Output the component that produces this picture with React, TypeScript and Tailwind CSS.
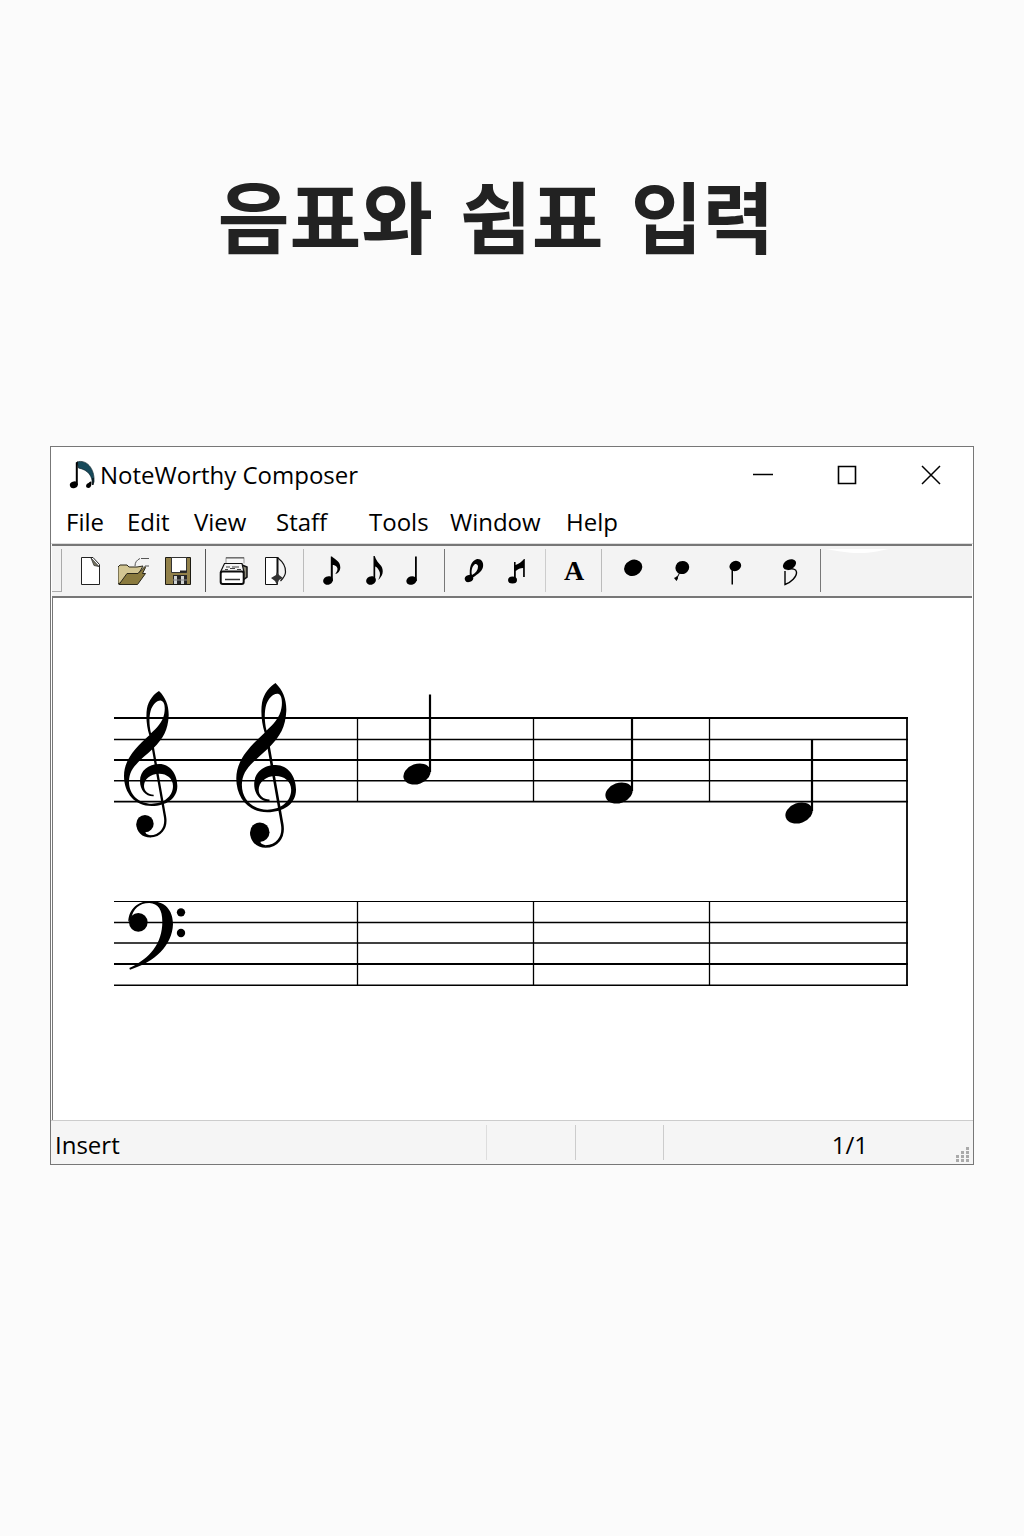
import type { ReactNode } from 'react'
import { clsx } from 'clsx'

interface Tool {
  label: string
  viewBox: string
  icon: ReactNode
}

interface ToolGroup {
  name: string
  className: string
  tools: Tool[]
}

const menus = [
  { title: 'File', className: 'w-[61px]' },
  { title: 'Edit', className: 'w-[67px]' },
  { title: 'View', className: 'w-[82px]' },
  { title: 'Staff', className: 'w-[93px]' },
  { title: 'Tools', className: 'w-[81px]' },
  { title: 'Window', className: 'w-[116px]' },
  { title: 'Help', className: 'w-[60px]' },
]

const toolGroups: ToolGroup[] = [
  {
    name: 'File',
    className: 'gap-3 pl-3 pr-[11px] border-[#555]',
    tools: [
      {
        label: 'New',
        viewBox: '74 555 32 32',
        icon: (
          <>
            <path d="M81.5 557.5H93l6.5 7v20h-18z" fill="#fff" stroke="#222" />
            <path d="M91 558l8 8.500-5-1z" fill="#77745f" stroke="#333" strokeWidth=".8" />
          </>
        ),
      },
      {
        label: 'Open',
        viewBox: '118 555 32 32',
        icon: (
          <>
            <path d="M118 584v-17l2-2h7l2 2h8l6-1-4 7z" fill="#d3c693" stroke="#2a2719" />
            <path d="M119 584.500l8-11h11l7-7 .500 1-3 6h3l-8 11z" fill="#8a7a3e" stroke="#2a2719" />
            <path d="M135 566c0-4 2-6 5-7.500M141 558.500h8M145 566h4" fill="none" stroke="#444" strokeWidth=".9" />
          </>
        ),
      },
      {
        label: 'Save',
        viewBox: '162 555 32 32',
        icon: (
          <>
            <path d="M165.500 557.500h25v27h-25z" fill="#91804a" stroke="#1c1a12" />
            <path d="M171.500 557.500h15v15h-15z" fill="#fff" stroke="#333" />
            <path d="M180 571.500h7" stroke="#222" strokeWidth="2" />
            <path d="M173 575h14v9h-14z" fill="#262626" />
            <path d="M174 576h3v8h-3zM181 576h3v8h-3z" fill="#cfd2d2" />
            <path d="M173 580h14" stroke="#888" />
          </>
        ),
      },
    ],
  },
  {
    name: 'Print',
    className: 'gap-[10px] pl-3 pr-[11px] border-[#bbb]',
    tools: [
      {
        label: 'Print',
        viewBox: '218 555 32 32',
        icon: (
          <>
            <path d="M226 563v-5.500h18v6" fill="#f6f6f6" stroke="#999" />
            <path d="M226 558h18" stroke="#333" strokeWidth=".8" />
            <path d="M242 565l5 2v10l-4 3z" fill="#8d8a79" stroke="#111" strokeWidth="1.500" />
            <path d="M220.500 572l4-8.500h17.500l2 8.500z" fill="#f4f4f4" stroke="#111" strokeWidth="1.200" />
            <path d="M226 567h4m2 0h7M225 569.500h3m2-1h5m2 1h4" stroke="#444" strokeWidth="1.200" />
            <rect x="220.700" y="571.500" width="23" height="12.500" rx="2" fill="#fff" stroke="#0c0c0c" strokeWidth="2" />
            <path d="M225 579.500h15" stroke="#333" strokeWidth="1.500" />
          </>
        ),
      },
      {
        label: 'Print preview',
        viewBox: '260 555 32 32',
        icon: (
          <>
            <path d="M265.500 557.500h12v27h-12z" fill="#fff" stroke="#111" />
            <path d="M277.500 557v20" stroke="#111" strokeWidth="2" />
            <path d="M278 558c5 4 8 8 7.500 14 0 3-2 6-5 9" fill="none" stroke="#111" strokeWidth="1.200" />
            <path d="M271 578l5-3 1-3 2 3 4 3-4 2-2 5-2-4z" fill="#333" />
          </>
        ),
      },
    ],
  },
  {
    name: 'Notes',
    className: 'gap-2 pl-3 pr-4 border-[#777]',
    tools: [
      {
        label: 'Eighth note',
        viewBox: '316 555 32 32',
        icon: (
          <>
            <ellipse cx="328" cy="580.500" rx="5" ry="4.200" transform="rotate(-25 328 580.500)" />
            <path d="M330.800 556.500h1.200c1 2 8.500 4 8.300 11 0 3-2 6-5 6.500 2-3 3-5 1.500-7-1-1.500-3-2-4-2v16h-2z" />
          </>
        ),
      },
      {
        label: 'Sixteenth note',
        viewBox: '356 555 32 32',
        icon: (
          <>
            <ellipse cx="371" cy="580.500" rx="5" ry="4.200" transform="rotate(-25 371 580.500)" />
            <path d="M373.500 556h1.200c1 4 4 7 6.500 10 3 5 1.500 10-3 14 2-4 2.500-7 .500-10-1-2-2-3-3.500-3.500v15h-1.700z" />
          </>
        ),
      },
      {
        label: 'Quarter note',
        viewBox: '396 555 32 32',
        icon: (
          <>
            <ellipse cx="411.500" cy="580.500" rx="5.300" ry="4.200" transform="rotate(-20 411.500 580.500)" />
            <path d="M415 556.500h1.800V581H415z" />
          </>
        ),
      },
    ],
  },
  {
    name: 'Modifiers',
    className: 'gap-[10px] px-[13px] border-[#ccc]',
    tools: [
      {
        label: 'Slur',
        viewBox: '458 555 32 32',
        icon: (
          <>
            <ellipse cx="469" cy="578.500" rx="4.300" ry="3.500" transform="rotate(-20 469 578.500)" />
            <path
              fillRule="evenodd"
              d="M470 577c-1-10 1-16 7-18 4-.500 7 3 6 8-1 5-7 8-12 12zM472 575c4-2 6-5 6-8.500 0-2-2-3-3.500-2-2.500 2-3.500 7-2.500 10.500z"
            />
          </>
        ),
      },
      {
        label: 'Beam',
        viewBox: '500 555 32 32',
        icon: (
          <>
            <ellipse cx="512.500" cy="580" rx="4.500" ry="3.500" />
            <path d="M514 562h1.600v3c3-1 6-3 8.400-6h.800v18h-1.700v-9c-3 0-5 1-7.300 3v9H514z" />
          </>
        ),
      },
    ],
  },
]

const entryTools: Tool[] = [
  {
    label: 'Whole note',
    viewBox: '617 555 32 32',
    icon: <ellipse cx="633.200" cy="567.800" rx="9.300" ry="7.900" transform="rotate(-25 633.200 567.800)" />,
  },
  {
    label: 'Grace note',
    viewBox: '669 555 32 32',
    icon: (
      <>
        <ellipse cx="682.300" cy="567.500" rx="7" ry="6.500" transform="rotate(-25 682.300 567.500)" />
        <path d="M680 572l-3 6" stroke="#000" />
        <path d="M674 578l2-1 1.500-1.500.500 3-1.500 2.500z" />
      </>
    ),
  },
  {
    label: 'Stem down',
    viewBox: '721 555 32 32',
    icon: (
      <>
        <ellipse cx="735.300" cy="566" rx="6" ry="5" transform="rotate(-20 735.300 566)" />
        <path d="M731.500 567h1.500v17.500h-1.500z" />
      </>
    ),
  },
  {
    label: 'Flag down',
    viewBox: '773 555 32 32',
    icon: (
      <>
        <ellipse cx="789.500" cy="564.500" rx="7" ry="4.800" transform="rotate(-28 789.500 564.500)" />
        <path d="M785 571v13.500c6-2 12-8 11.500-12.500-.300-3-4-4-9-2.500" fill="none" stroke="#000" strokeWidth="1.400" />
      </>
    ),
  },
]

const trebleStaff = [
  { y: 718, width: 2 },
  { y: 739.5, width: 1.4 },
  { y: 760, width: 2 },
  { y: 780.7, width: 1.4 },
  { y: 801.7, width: 1.8 },
]

const bassStaff = [
  { y: 901.5, width: 1.2 },
  { y: 922.5, width: 1.4 },
  { y: 943, width: 1.7 },
  { y: 964, width: 2 },
  { y: 985.2, width: 1.5 },
]

const notes = [
  { x: 417, y: 774, top: 694.5 },
  { x: 619, y: 793, top: 718 },
  { x: 799, y: 813, top: 740 },
]

function ToolButton({ tool }: { tool: Tool }) {
  return (
    <button type="button" aria-label={tool.label} className="size-8">
      <svg viewBox={tool.viewBox} className="size-8">
        {tool.icon}
      </svg>
    </button>
  )
}

function AppIcon() {
  return (
    <svg viewBox="68 457 28 32" className="h-8 w-7">
      <path d="M77 460c9-3 18 6 17 20l-1.500 3c0-9-4-15-14-17z" fill="#16495a" stroke="#0b222b" strokeWidth=".7" />
      <path d="M75.800 460.500l2-1V483h-2z" />
      <ellipse cx="73.800" cy="482.800" rx="4" ry="3.300" transform="rotate(-20 73.800 482.800)" />
      <path d="M91.500 479.500c0 3 0 6-3 6.500-3 0-3-3-1-4.500 2-.500 2-2.500 4-2zM93.500 476v7h-1v-7z" />
    </svg>
  )
}

function TrebleClef({ transform }: { transform: string }) {
  return (
    <g transform={transform}>
      <path
        fillRule="evenodd"
        d="M177 33C197 52 207 78 206 108C204 150 190 175 160 205C120 243 87 262 87 305C87 345 118 371 155 371C190 371 219 350 219 318C219 295 200 281 178 281C150 281 132 298 132 318C132 333 145 344 161 344L161 349C137 350 120 330 120 303C120 272 145 252 178 252C210 252 232 282 232 318C232 355 200 378 155 378C105 378 72 340 72 288C72 240 105 205 148 166C140 140 137 110 141 85C146 60 162 42 177 33ZM184 62C194 65 196 82 193 100C189 125 170 145 153 160C147 135 147 110 152 92C158 75 170 60 184 62Z"
      />
      <path d="M158 200L195 410C201 445 180 469 150 469" fill="none" stroke="#000" strokeWidth="7" />
      <path d="M109 431C109 456 127 472.500 151 472.500V465.500C140 464 135 460 136 450Z" />
      <circle cx="135" cy="431" r="26" />
    </g>
  )
}

function BassClef() {
  return (
    <g transform="translate(100 890) scale(.3333)">
      <path d="M85 95C86 57 115 33 150 33C195 33 219 60 219 103C217 165 165 217 90 239L88 234C150 205 187 160 187 95C187 60 175 40 148 39C118 39 98 57 94 86Z" />
      <circle cx="115" cy="97" r="28" />
      <circle cx="243" cy="67" r="12.500" />
      <circle cx="243" cy="129" r="12.500" />
    </g>
  )
}

function Score() {
  return (
    <svg viewBox="53 598 918 522" className="block w-full" role="img" aria-label="Score">
      {[...trebleStaff, ...bassStaff].map((line) => (
        <line key={line.y} x1="114" x2="908" y1={line.y} y2={line.y} stroke="#000" strokeWidth={line.width} />
      ))}
      {[357.5, 533.5, 709.5].map((x) => (
        <path key={x} d={`M${x} 718V802M${x} 901V985`} stroke="#000" strokeWidth="1.300" />
      ))}
      <path d="M907 717V986" stroke="#000" strokeWidth="1.800" />
      <TrebleClef transform="translate(100 680) scale(.3333)" />
      <TrebleClef transform="translate(209.400 670.600) scale(.3733 .375)" />
      <BassClef />
      {notes.map((note) => (
        <g key={note.x}>
          <ellipse
            cx={note.x}
            cy={note.y}
            rx="14"
            ry="10"
            transform={`rotate(-20 ${note.x} ${note.y})`}
          />
          <path d={`M${note.x + 13} ${note.top}V${note.y - 2}`} stroke="#000" strokeWidth="2.200" />
        </g>
      ))}
    </svg>
  )
}

function TitleBar() {
  return (
    <header className="flex h-[54px] items-center justify-between pl-[17px] pt-[2px]">
      <div className="flex items-center gap-1">
        <AppIcon />
        <span className="text-2xl">NoteWorthy Composer</span>
      </div>
      <div className="flex">
        <button type="button" aria-label="Minimize" className="flex h-8 w-[84px] items-center justify-center">
          <svg viewBox="0 0 22 22" className="size-[22px]">
            <path d="M1 10.500h20" stroke="#000" strokeWidth="1.500" />
          </svg>
        </button>
        <button type="button" aria-label="Maximize" className="flex h-8 w-[84px] items-center justify-center">
          <svg viewBox="0 0 22 22" className="size-[22px]">
            <path d="M2.500 2.500h17v17h-17z" fill="none" stroke="#000" strokeWidth="1.600" />
          </svg>
        </button>
        <button type="button" aria-label="Close" className="flex h-8 w-[84px] items-center justify-center">
          <svg viewBox="0 0 22 22" className="size-[22px]">
            <path d="M2 2l18 18M20 2L2 20" stroke="#000" strokeWidth="1.500" />
          </svg>
        </button>
      </div>
    </header>
  )
}

function Toolbar() {
  return (
    <div role="toolbar" className="mx-px flex h-[54px] items-start border-y-2 border-[#777] bg-[#f3f3f3] pt-[3px]">
      <div className="h-[43px] w-[10px] border-b border-r border-[#aaa]" />
      {toolGroups.map((group) => (
        <div
          key={group.name}
          role="group"
          aria-label={group.name}
          className={clsx('flex h-[43px] items-center border-r', group.className)}
        >
          {group.tools.map((tool) => (
            <ToolButton key={tool.label} tool={tool} />
          ))}
        </div>
      ))}
      <div className="flex h-[43px] items-center border-r border-[#bbb] pl-3 pr-[11px]">
        <button
          type="button"
          aria-label="Text"
          className="size-8 font-['Liberation_Serif',serif] text-[28px] font-bold leading-8"
        >
          A
        </button>
      </div>
      <div className="flex h-[43px] items-center gap-5 border-r border-[#777] px-[15px]">
        {entryTools.map((tool) => (
          <ToolButton key={tool.label} tool={tool} />
        ))}
      </div>
      <svg viewBox="0 0 64 7" className="ml-1 h-[7px] w-16">
        <path d="M0 0H64C52 2 48 4 34 4C22 4 14 2 0 0Z" fill="#fff" />
      </svg>
    </div>
  )
}

function StatusBar() {
  return (
    <footer className="flex h-[44px] items-stretch border-t border-[#ccc] bg-[#f5f5f5] pt-1 text-2xl">
      <div className="mb-1 flex w-[47.3%] items-center border-r border-[#ddd] pl-1 pt-1">Insert</div>
      <div className="mb-1 w-[9.6%] border-r border-[#ccc]" />
      <div className="mb-1 w-[9.6%] border-r border-[#ccc]" />
      <div className="mb-1 flex flex-1 items-center justify-end pr-[103px] pt-1">1/1</div>
      <svg viewBox="0 0 16 16" className="-ml-4 mr-[2px] mb-px size-4 self-end" fill="#aaa">
        <path d="M11 0h3v3h-3zM6 4h3v3H6zM11 4h3v3h-3zM1 8h3v3H1zM6 8h3v3H6zM11 8h3v3h-3zM1 12h3v3H1zM6 12h3v3H6zM11 12h3v3h-3z" />
      </svg>
    </footer>
  )
}

export default function App() {
  return (
    <main className="min-h-screen bg-[#fbfbfb] px-[50px] pb-24 pt-[154px] font-['Open_Sans','Noto_Sans_CJK_KR',sans-serif] text-black">
      <h1 className="flex justify-center gap-[27px] pr-8 font-['Noto_Sans_CJK_KR',sans-serif] text-[78px] font-bold leading-[120px] text-[#222]">
        <span>음표와</span> <span>쉼표</span> <span>입력</span>
      </h1>
      <section className="mt-[172px] border border-[#777] bg-white">
        <TitleBar />
        <nav className="flex h-[43px] items-center border-b border-[#ddd] pl-[15px] text-2xl">
          {menus.map((menu) => (
            <button key={menu.title} type="button" className={clsx('text-left', menu.className)}>
              {menu.title}
            </button>
          ))}
        </nav>
        <Toolbar />
        <div className="ml-px mr-[2px] border-l border-[#777]">
          <Score />
        </div>
        <StatusBar />
      </section>
    </main>
  )
}
